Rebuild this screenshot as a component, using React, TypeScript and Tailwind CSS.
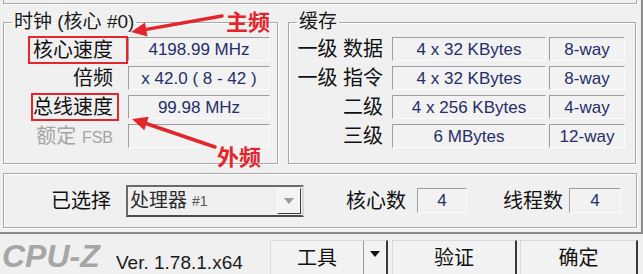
import React from "react";

const valBox =
  "flex items-center justify-center bg-[#f2f2f2] border border-t-[#9e9e9e] border-l-[#9e9e9e] border-r-[#fcfcfc] border-b-[#fcfcfc] text-[#262d69] text-[17px] leading-none";

const groupCls =
  "border border-[#a9a9a9] shadow-[inset_1px_1px_0_#ffffff,1px_1px_0_#ffffff]";

function Legend({ children }: { children: React.ReactNode }) {
  return (
    <legend className="ml-[8px] px-[2px] text-[19px] leading-[20px] text-[#1a1a1a]">
      {children}
    </legend>
  );
}

function ClockRow({
  label,
  value,
  variant,
}: {
  label: React.ReactNode;
  value: string;
  variant: "red1" | "red2" | "plain";
}) {
  return (
    <div className="flex h-[24px] items-center">
      <div className="flex w-[124px] justify-end items-center h-full">
        {variant === "red1" && (
          <span className="mt-[2px] flex h-[28px] items-center border-2 border-[#e2262b] pl-[3px] pr-[13px] text-[20px] leading-none text-[#111]">
            {label}
          </span>
        )}
        {variant === "red2" && (
          <span className="mr-[9px] flex h-[28px] items-center border-2 border-[#e2262b] pl-0 pr-[4px] text-[20px] leading-none text-[#111]">
            {label}
          </span>
        )}
        {variant === "plain" && (
          <span className="pr-[15px] text-[20px] leading-none text-[#111]">{label}</span>
        )}
      </div>
      <div className={`${valBox} w-[142px] h-[24px]`}>{value}</div>
    </div>
  );
}

function CacheRow({ label, size, way }: { label: string; size: string; way: string }) {
  return (
    <div className="flex h-[24px] items-center">
      <div className="w-[103px] pr-[9px] text-right text-[20px] leading-none text-[#111] whitespace-pre">
        {label}
      </div>
      <div className={`${valBox} w-[154px] h-[24px]`}>{size}</div>
      <div className={`${valBox} ml-[3px] w-[76px] h-[24px]`}>{way}</div>
    </div>
  );
}

export default function App() {
  return (
    <div className="relative w-[643px] h-[274px] overflow-hidden bg-[#f0f0f0] font-['Liberation_Sans','Noto_Sans_CJK_SC',sans-serif]">
      {/* tab page */}
      <div className="h-[234px] border-r-2 border-b-2 border-r-[#8a8a8a] border-b-[#8a8a8a] pl-[3px] pr-[3px]">
        {/* bottom of processor group */}
        <div className="h-[4px] w-[634px] border border-t-0 border-[#a9a9a9] shadow-[1px_1px_0_#ffffff]" />

        <div className="mt-[8px] flex gap-[10px]">
          <fieldset className={`${groupCls} w-[275px] px-0 pt-[5px] pb-[15px]`}>
            <Legend>时钟 (核心 #0)</Legend>
            <div className="flex flex-col gap-[5px]">
              <ClockRow label="核心速度" value="4198.99 MHz" variant="red1" />
              <ClockRow label="倍频" value="x 42.0 ( 8 - 42 )" variant="plain" />
              <ClockRow label="总线速度" value="99.98 MHz" variant="red2" />
              <ClockRow
                label={
                  <span className="text-[#a4a4a4]">
                    额定 <span className="text-[16px]">FSB</span>
                  </span>
                }
                value=""
                variant="plain"
              />
            </div>
          </fieldset>

          <fieldset className={`${groupCls} w-[348px] px-0 pt-[5px] pb-[15px]`}>
            <Legend>缓存</Legend>
            <div className="flex flex-col gap-[5px]">
              <CacheRow label="一级 数据" size="4 x 32 KBytes" way="8-way" />
              <CacheRow label="一级 指令" size="4 x 32 KBytes" way="8-way" />
              <CacheRow label="二级" size="4 x 256 KBytes" way="4-way" />
              <CacheRow label="三级" size="6 MBytes" way="12-way" />
            </div>
          </fieldset>
        </div>

        {/* selection group */}
        <div className={`${groupCls} mt-[9px] h-[55px] w-[634px] flex items-center`}>
          <span className="ml-[47px] text-[20px] leading-none text-[#111]">已选择</span>
          <div className="ml-[15px] flex h-[32px] w-[178px] items-center border-2 border-t-[#6a6a6a] border-l-[#6a6a6a] border-b-[#4a4a4a] border-r-[#d8d8d8] bg-[#f0f0f0]">
            <span className="ml-[2px] text-[19px] leading-none text-[#2a2a2a]">处理器</span>
            <span className="ml-[5px] text-[14px] leading-none text-[#555]">#1</span>
            <div className="ml-auto mr-[1px] flex h-[26px] w-[24px] items-center justify-center border border-t-[#fafafa] border-l-[#fafafa] border-r-[#3c3c3c] border-b-[#3c3c3c] bg-[#f4f4f4]">
              <svg width="10" height="6" viewBox="0 0 10 6">
                <polygon points="0,0 10,0 5,6" fill="#9a9a9a" />
              </svg>
            </div>
          </div>
          <span className="ml-[42px] text-[20px] leading-none text-[#111]">核心数</span>
          <div className={`${valBox} ml-[11px] h-[25px] w-[50px]`}>4</div>
          <span className="ml-[36px] text-[20px] leading-none text-[#111]">线程数</span>
          <div className={`${valBox} ml-[6px] h-[25px] w-[52px]`}>4</div>
        </div>
      </div>

      {/* bottom bar */}
      <div className="flex items-start pt-[6px]">
        <div className="ml-[2px] w-[114px]">
          <span className="text-[32px] leading-[32px] font-bold italic tracking-[0px] text-[#a6a6a6]">
            CPU-Z
          </span>
        </div>
        <div className="w-[154px] pt-[12px]">
          <span className="text-[19px] leading-none text-[#1a1a1a]">Ver. 1.78.1.x64</span>
        </div>
        <div className="flex h-[40px] w-[118px] border-t border-l border-t-[#dadada] border-l-[#dadada] border-r-2 border-r-[#3a3a3a] bg-[#f2f2f2]">
          <div className="flex w-[93px] items-center justify-center border-r border-r-[#9a9a9a] pb-[6px] text-[20px] leading-none text-[#111]">
            工具
          </div>
          <div className="flex flex-1 items-start justify-center pt-[10px]">
            <svg width="10" height="6" viewBox="0 0 10 6">
              <polygon points="0,0 10,0 5,6" fill="#111" />
            </svg>
          </div>
        </div>
        <div className="ml-[4px] flex h-[40px] w-[125px] items-center justify-center border-t border-l border-t-[#dadada] border-l-[#dadada] border-r-2 border-r-[#3a3a3a] bg-[#f2f2f2] pb-[6px] text-[20px] leading-none text-[#111]">
          验证
        </div>
        <div className="ml-[3px] flex h-[40px] w-[118px] items-center justify-center border-t border-l border-t-[#dadada] border-l-[#dadada] border-r-2 border-r-[#3a3a3a] bg-[#f2f2f2] pb-[6px] text-[20px] leading-none text-[#111]">
          确定
        </div>
      </div>

      {/* red annotations */}
      <svg className="pointer-events-none absolute left-0 top-0" width="643" height="274" viewBox="0 0 643 274">
        <line x1="222" y1="16" x2="145" y2="29.6" stroke="#e2262b" strokeWidth="3.5" strokeLinecap="round" />
        <polygon points="131,32 147.5,36.5 145,22.5" fill="#e2262b" />
        <line x1="215" y1="147" x2="146" y2="123.5" stroke="#e2262b" strokeWidth="3.5" strokeLinecap="round" />
        <polygon points="132,119 148.8,116.8 144.3,130.2" fill="#e2262b" />
      </svg>
      <span className="absolute left-[226px] top-[7px] text-[22px] leading-[27px] font-bold text-[#e2262b] font-['Noto_Sans_CJK_SC',sans-serif]">
        主频
      </span>
      <span className="absolute left-[217px] top-[142px] text-[22px] leading-[27px] font-bold text-[#e2262b] font-['Noto_Sans_CJK_SC',sans-serif]">
        外频
      </span>
    </div>
  );
}
